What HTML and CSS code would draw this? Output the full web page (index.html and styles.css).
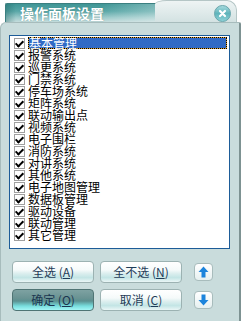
FILE: index.html
```html
<!DOCTYPE html>
<html>
<head>
<meta charset="utf-8">
<link rel="stylesheet" href="styles.css">
</head>
<body>
<div class="win">
  <div class="titlebar">
    <div class="tab"><span class="title">操作面板设置</span></div>
    <div class="tright">
      <span class="close">
        <svg width="17" height="17" viewBox="0 0 17 17">
          <defs>
            <linearGradient id="cg" x1="0" y1="0" x2="0" y2="1">
              <stop offset="0" stop-color="#a9dcdf"/>
              <stop offset="0.5" stop-color="#5fb4bb"/>
              <stop offset="1" stop-color="#8fd3d8"/>
            </linearGradient>
          </defs>
          <circle cx="8.5" cy="8.5" r="8" fill="url(#cg)" stroke="#6aa6ac" stroke-width="1"/>
          <path d="M6 6 L11 11 M11 6 L6 11" stroke="#fff" stroke-width="2.2" stroke-linecap="round"/>
        </svg>
      </span>
    </div>
  </div>
  <div class="panel">
    <div class="list">
      <div class="item"><span class="cb"></span><span class="lbl sel">基本管理</span></div>
      <div class="item"><span class="cb"></span><span class="lbl">报警系统</span></div>
      <div class="item"><span class="cb"></span><span class="lbl">巡更系统</span></div>
      <div class="item"><span class="cb"></span><span class="lbl">门禁系统</span></div>
      <div class="item"><span class="cb"></span><span class="lbl">停车场系统</span></div>
      <div class="item"><span class="cb"></span><span class="lbl">矩阵系统</span></div>
      <div class="item"><span class="cb"></span><span class="lbl">联动输出点</span></div>
      <div class="item"><span class="cb"></span><span class="lbl">视频系统</span></div>
      <div class="item"><span class="cb"></span><span class="lbl">电子围栏</span></div>
      <div class="item"><span class="cb"></span><span class="lbl">消防系统</span></div>
      <div class="item"><span class="cb"></span><span class="lbl">对讲系统</span></div>
      <div class="item"><span class="cb"></span><span class="lbl">其他系统</span></div>
      <div class="item"><span class="cb"></span><span class="lbl">电子地图管理</span></div>
      <div class="item"><span class="cb"></span><span class="lbl">数据板管理</span></div>
      <div class="item"><span class="cb"></span><span class="lbl">驱动设备</span></div>
      <div class="item"><span class="cb"></span><span class="lbl">联动管理</span></div>
      <div class="item"><span class="cb"></span><span class="lbl">其它管理</span></div>
    </div>
    <div class="btns">
      <div class="btn">全选 (<u>A</u>)</div>
      <div class="btn">全不选 (<u>N</u>)</div>
      <div class="arrow">
        <svg width="11" height="12" viewBox="0 0 11 12"><path d="M5.5 0.5 L10.5 6 H7.5 V11.5 H3.5 V6 H0.5 Z" fill="#1c84dc"/></svg>
      </div>
      <div class="btn primary">确定 (<u>O</u>)</div>
      <div class="btn">取消 (<u>C</u>)</div>
      <div class="arrow">
        <svg width="11" height="12" viewBox="0 0 11 12"><path d="M5.5 11.5 L10.5 6 H7.5 V0.5 H3.5 V6 H0.5 Z" fill="#1c84dc"/></svg>
      </div>
    </div>
  </div>
</div>
</body>
</html>
```
FILE: styles.css
```css
html, body {
  margin: 0;
  padding: 0;
  background: #ffffff;
}
body {
  width: 241px;
  height: 321px;
  overflow: hidden;
  font-family: "Noto Sans CJK SC", "Liberation Sans", sans-serif;
}
.win {
  width: 241px;
  height: 321px;
  display: flex;
  flex-direction: column;
}
.titlebar {
  display: flex;
  height: 22px;
  margin-left: 5px;
  margin-right: 4px;
  flex: none;
}
.tab {
  flex: 1;
  margin-top: 3px;
  border-top: 1px solid #3b7f80;
  border-left: 1px solid #3b7f80;
  border-top-left-radius: 2px;
  background:
    linear-gradient(90deg, rgba(20,90,90,0.35) 0, rgba(20,90,90,0) 10px, rgba(255,255,255,0) 60%, rgba(255,255,255,0.35) 100%),
    linear-gradient(#3f9595 0%, #5aa7a7 40%, #9ccaca 75%, #c4dcdc 100%);
  display: flex;
  align-items: center;
  padding-left: 14px;
}
.title {
  color: #ffffff;
  font-weight: bold;
  font-size: 14px;
  line-height: 16px;
  text-shadow: 0 0 1px rgba(0,60,60,0.5);
}
.tright {
  width: 76px;
  margin-left: -12px;
  border-top: 1px solid #b5c6c6;
  border-right: 1px solid #b5c6c6;
  border-top-left-radius: 12px 4px;
  border-top-right-radius: 10px;
  background: linear-gradient(#eef4f4, #d3e2e2);
  display: flex;
  justify-content: flex-end;
  align-items: flex-start;
  padding-top: 4px;
  padding-right: 5px;
}
.close {
  display: block;
  width: 17px;
  height: 17px;
}
.close svg { display: block; }
.panel {
  flex: none;
  height: 295px;
  background: #c9dcdc;
  border-top: 1px solid #a7bcbc;
  border-left: 1px solid #a7bcbc;
  border-right: 2px solid #7d9292;
  border-bottom: 2px solid #7d9292;
  border-radius: 6px 2px 6px 6px;
  padding: 12px 0 0 8px;
}
.list {
  width: 219px;
  height: 211px;
  border: 1px solid #1d5c98;
  background: #ffffff;
  padding-top: 1px;
  box-sizing: content-box;
}
.item {
  display: flex;
  align-items: center;
  height: 12px;
  padding-left: 4px;
}
.cb {
  position: relative;
  width: 9px;
  height: 9px;
  border: 1px solid #a0a0a0;
  background: #fff;
  flex: none;
  margin-right: 3px;
}
.cb::after {
  content: "";
  position: absolute;
  left: 2px;
  top: 0px;
  width: 3px;
  height: 6px;
  border-right: 2px solid #000;
  border-bottom: 2px solid #000;
  transform: rotate(45deg);
}
.lbl {
  font-size: 12px;
  line-height: 12px;
  color: #000;
  white-space: nowrap;
}
.lbl.sel {
  flex: 1;
  margin-right: 2px;
  color: #fff;
  height: 10px;
  line-height: 10px;
  border: 1px dotted #000;
  background: linear-gradient(#316ac5, #316ac5) padding-box, #e0a030 border-box;
}
.btns {
  display: grid;
  grid-template-columns: 82px 82px 19px;
  grid-auto-rows: 22px;
  column-gap: 6px;
  row-gap: 6px;
  margin-top: 12px;
  margin-left: 3px;
}
.btns .arrow {
  margin-left: 6px;
}
.btn {
  box-sizing: border-box;
  border: 1px solid #9cb2b2;
  border-radius: 4px;
  background: linear-gradient(#ffffff 0%, #f5fafa 40%, #dbeeee 58%, #c3e5e5 78%, #eaf6f6 100%);
  color: #1f3c58;
  font-size: 12px;
  display: flex;
  align-items: center;
  justify-content: center;
  line-height: 14px;
}
.btn u {
  text-underline-offset: 1px;
}
.btn.primary {
  border-color: #4f7474;
  background: linear-gradient(#7ea2a2 0%, #6a9393 40%, #5a9090 55%, #78dede 80%, #a4f6f6 100%);
  color: #1b3650;
}
.arrow {
  box-sizing: border-box;
  width: 19px;
  height: 18px;
  align-self: center;
  border: 1px solid #a8bcbc;
  border-radius: 4px;
  background: linear-gradient(#ffffff, #e6f0f0);
  display: flex;
  align-items: center;
  justify-content: center;
}
.arrow svg { display: block; }
```
